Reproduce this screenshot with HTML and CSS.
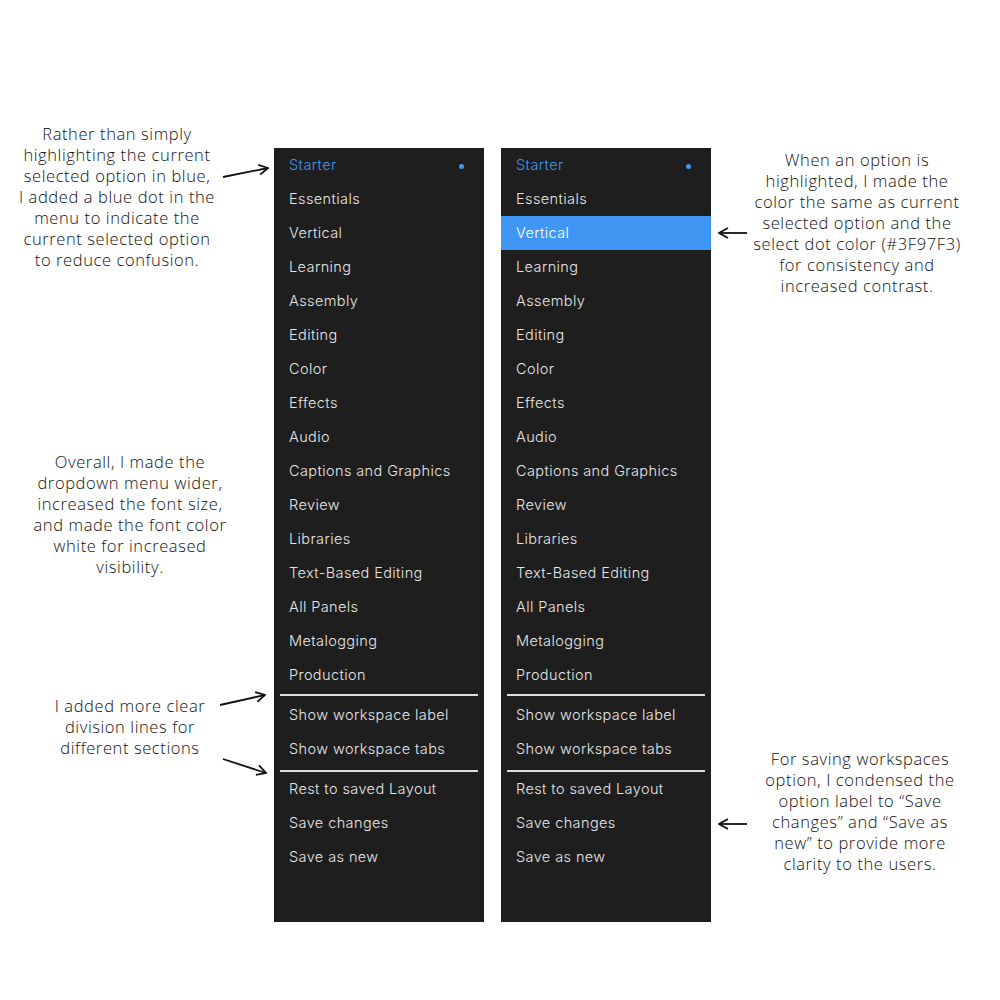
FILE: index.html
```html
<!DOCTYPE html>
<html>
<head>
	<title>Workspace Menu Redesign</title>
	<link rel="stylesheet" href="styles.css">
</head>
<body>
<div class="page">
	<div class="side left">
		<p class="note note-dot">Rather than simply<br>highlighting the current<br>selected option in blue,<br>I added a blue dot in the<br>menu to indicate the<br>current selected option<br>to reduce confusion.</p>
		<p class="note note-wide">Overall, I made the<br>dropdown menu wider,<br>increased the font size,<br>and made the font color<br>white for increased<br>visibility.</p>
		<p class="note note-lines">I added more clear<br>division lines for<br>different sections</p>
	</div>

	<ul class="menu">
		<li class="item current">Starter<span class="dot"></span></li>
		<li class="item">Essentials</li>
		<li class="item">Vertical</li>
		<li class="item">Learning</li>
		<li class="item">Assembly</li>
		<li class="item">Editing</li>
		<li class="item">Color</li>
		<li class="item">Effects</li>
		<li class="item">Audio</li>
		<li class="item">Captions and Graphics</li>
		<li class="item">Review</li>
		<li class="item">Libraries</li>
		<li class="item">Text-Based Editing</li>
		<li class="item">All Panels</li>
		<li class="item">Metalogging</li>
		<li class="item">Production</li>
		<li class="divider first"></li>
		<li class="item">Show workspace label</li>
		<li class="item">Show workspace tabs</li>
		<li class="divider second"></li>
		<li class="item">Rest to saved Layout</li>
		<li class="item">Save changes</li>
		<li class="item">Save as new</li>
	</ul>

	<ul class="menu">
		<li class="item current">Starter<span class="dot"></span></li>
		<li class="item">Essentials</li>
		<li class="item hover">Vertical</li>
		<li class="item">Learning</li>
		<li class="item">Assembly</li>
		<li class="item">Editing</li>
		<li class="item">Color</li>
		<li class="item">Effects</li>
		<li class="item">Audio</li>
		<li class="item">Captions and Graphics</li>
		<li class="item">Review</li>
		<li class="item">Libraries</li>
		<li class="item">Text-Based Editing</li>
		<li class="item">All Panels</li>
		<li class="item">Metalogging</li>
		<li class="item">Production</li>
		<li class="divider first"></li>
		<li class="item">Show workspace label</li>
		<li class="item">Show workspace tabs</li>
		<li class="divider second"></li>
		<li class="item">Rest to saved Layout</li>
		<li class="item">Save changes</li>
		<li class="item">Save as new</li>
	</ul>

	<div class="side right">
		<p class="note note-hover">When an option is<br>highlighted, I made the<br>color the same as current<br>selected option and the<br>select dot color (#3F97F3)<br>for consistency and<br>increased contrast.</p>
		<p class="note note-save">For saving workspaces<br>option, I condensed the<br>option label to “Save<br>changes” and “Save as<br>new” to provide more<br>clarity to the users.</p>
	</div>

	<!-- arrows pointing from the notes to the menus -->
	<svg class="arrows" width="1000" height="1000" viewBox="0 0 1000 1000">
		<defs>
			<marker id="head" viewBox="0 0 12 12" refX="11" refY="6" markerWidth="12" markerHeight="12" orient="auto" markerUnits="userSpaceOnUse">
				<path d="M2 1 L11 6 L2 11" fill="none" stroke="#111" stroke-width="1.8"/>
			</marker>
		</defs>
		<line x1="223" y1="177" x2="268" y2="168" marker-end="url(#head)"/>
		<line x1="220" y1="705" x2="265" y2="695" marker-end="url(#head)"/>
		<line x1="223" y1="759" x2="266" y2="773" marker-end="url(#head)"/>
		<line x1="747" y1="233" x2="719" y2="233" marker-end="url(#head)"/>
		<line x1="747" y1="824" x2="719" y2="824" marker-end="url(#head)"/>
	</svg>
</div>
</body>
</html>
```

FILE: styles.css
```css
body{
	margin: 0;
	background: #ffffff;
}

.page{
	position: relative;
	display: flex;
	width: 1000px;
	height: 1000px;
}

.side{
	display: flex;
	flex-direction: column;
}

.left{
	width: 274px;
}

.right{
	width: 289px;
}

.note{
	margin: 0;
	width: 240px;
	font-family: "Open Sans", "Noto Sans", sans-serif;
	font-weight: 300;
	font-size: 16.5px;
	line-height: 21px;
	color: #111111;
	text-align: center;
	letter-spacing: 0.6px;
}

.note-dot{
	margin-top: 123px;
	margin-left: -3px;
}

.note-wide{
	margin-top: 181px;
	margin-left: 10px;
}

.note-lines{
	margin-top: 118px;
	margin-left: 10px;
}

.note-hover{
	margin-top: 149px;
	margin-left: 26px;
}

.note-save{
	margin-top: 452px;
	margin-left: 29px;
}

.menu{
	list-style: none;
	margin: 148px 0 0 0;
	padding: 0;
	width: 210px;
	height: 774px;
	background: #1e1e1e;
	font-family: "Inter", "Noto Sans", sans-serif;
	font-weight: 300;
	font-size: 14.5px;
	letter-spacing: 0.4px;
	color: #e6e6e6;
}

.menu + .menu{
	margin-left: 17px;
}

.item{
	display: flex;
	align-items: center;
	height: 34px;
	padding: 0 0 2px 15px;
	box-sizing: border-box;
}

.current{
	color: #3f97f3;
}

.hover{
	background: #3f97f3;
	color: #ffffff;
}

.dot{
	width: 5px;
	height: 5px;
	margin-left: auto;
	margin-right: 20px;
	margin-top: 4px;
	border-radius: 50%;
	background: #3f97f3;
}

.divider{
	height: 2px;
	margin: 2px 6px;
	background: #dcdcdc;
}

.divider.second{
	margin: 4px 6px 0 6px;
}

.arrows{
	position: absolute;
	left: 0;
	top: 0;
	pointer-events: none;
}

.arrows line{
	stroke: #111;
	stroke-width: 1.8;
}
```
